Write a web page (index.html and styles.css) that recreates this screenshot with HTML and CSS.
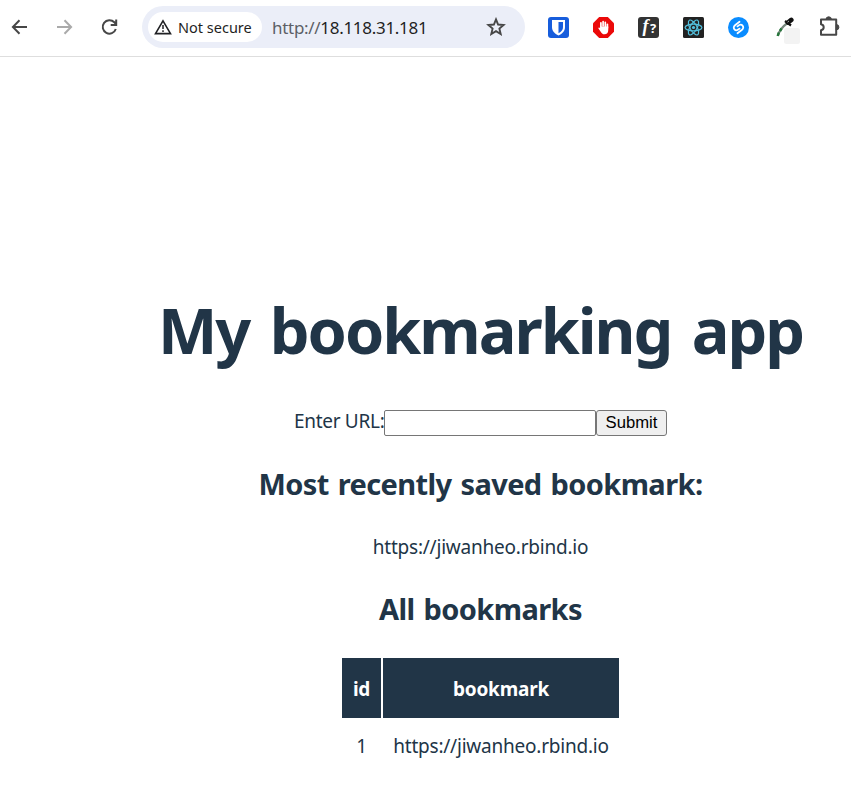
FILE: index.html
```
<!DOCTYPE html>
<html lang="en">
<head>
<meta charset="utf-8">
<title>My bookmarking app</title>
<link rel="stylesheet" href="styles.css">
</head>
<body>
<header class="toolbar">
  <nav class="nav">
    <svg width="18" height="18" viewBox="0 0 18 18" class="stroke"><path d="M16 9H2.500M8.500 2.200L1.900 9L8.500 15.800"/></svg>
    <svg width="18" height="18" viewBox="0 0 18 18" class="stroke disabled"><path d="M1 9H14.500M8.500 2.200L15.100 9L8.500 15.800"/></svg>
    <svg width="18" height="18" viewBox="0 0 18 18" class="stroke"><path d="M14.800 11A6.700 6.700 0 1 1 13.300 4.300L15.200 6.300M15.200 1.500V7H9.700"/></svg>
  </nav>
  <div class="address">
    <div class="chip">
      <svg width="18" height="16" viewBox="0 0 18 16"><path d="M9 1.800L16.500 14.600H1.500Z" fill="none" stroke="#202124" stroke-width="1.600"/><path d="M9 6V10M9 11.300V13" stroke="#202124" stroke-width="1.500"/></svg>
      <span class="chip-text">Not secure</span>
    </div>
    <span class="url"><span class="scheme">http://</span>18.118.31.181</span>
    <svg class="star" width="20" height="20" viewBox="0 0 20 20"><path d="M10 2.400L12.100 7.500L17.600 8L13.400 11.600L14.700 17L10 14.100L5.300 17L6.600 11.600L2.400 8L7.900 7.500Z" fill="none" stroke="#474747" stroke-width="1.900"/></svg>
  </div>
  <div class="extensions">
    <svg width="21" height="21" viewBox="0 0 21 21"><rect width="21" height="21" rx="3" fill="#175ddc"/><path d="M4 3H17V10C17 14 14.500 16.500 10.500 18.500C6.500 16.500 4 14 4 10Z" fill="#fff"/><path d="M10.500 5H15V10C15 13 13.500 14.500 10.500 16.200Z" fill="#175ddc"/></svg>
    <svg width="21" height="21" viewBox="0 0 21 21"><path d="M6.200 0H14.800L21 6.200V14.800L14.800 21H6.200L0 14.800V6.200Z" fill="#eb0909"/><path d="M7.900 10V5.800M10.100 9V4.500M12.300 10V5.300M14.400 11V7.300" stroke="#fff" stroke-width="1.700" stroke-linecap="round"/><path d="M7.100 9.500H15.250V13C15.250 16 13.800 17.300 11.500 17.300C9.500 17.300 8.600 16.200 7.700 14.700L5.300 11.200C5.300 10.200 6.400 10.200 7.100 11Z" fill="#fff"/></svg>
    <svg width="21" height="21" viewBox="0 0 21 21"><rect width="21" height="21" rx="3" fill="#333"/><text x="4.500" y="15.200" class="fn">f</text><text x="12" y="15.500" class="fn-mark">?</text></svg>
    <svg width="21" height="21" viewBox="0 0 21 21"><rect width="21" height="21" rx="1.500" fill="#222"/><g fill="none" stroke="#53c1de" stroke-width="1.200"><ellipse cx="10.500" cy="10.500" rx="8.400" ry="3.400"/><ellipse cx="10.500" cy="10.500" rx="8.400" ry="3.400" transform="rotate(60 10.500 10.500)"/><ellipse cx="10.500" cy="10.500" rx="8.400" ry="3.400" transform="rotate(120 10.500 10.500)"/></g><circle cx="10.500" cy="10.500" r="1.600" fill="#53c1de"/></svg>
    <svg width="21" height="21" viewBox="0 0 21 21"><circle cx="10.500" cy="10.500" r="10.500" fill="#0a8cff"/><path d="M11.500 4.800L7.300 8C5.300 9.700 5.300 11.500 6.800 12.800C8 13.800 9.500 13.300 11.500 11.600M9.500 16.200L13.700 13C15.700 11.300 15.700 9.500 14.200 8.200C13 7.200 11.500 7.700 9.500 9.400" fill="none" stroke="#fff" stroke-width="1.800" stroke-linecap="round"/></svg>
    <svg width="24" height="27" viewBox="0 0 24 27"><rect x="8" y="11" width="16" height="16" rx="2.500" fill="#f3f3f3"/><path d="M11.500 6C6 10 3.500 13 2 18.500" fill="none" stroke="#76867c" stroke-width="2.200"/><path d="M5.500 11.500L4 14M2.800 15.500L1.700 19" stroke="#26773b" stroke-width="2.500"/><path d="M9 4L15 8.500" stroke="#111" stroke-width="2.200"/><path d="M12 5.500L15.300 2.900" stroke="#111" stroke-width="4.600" stroke-linecap="round"/><path d="M11.500 5.200L13 4" stroke="#aaa"/></svg>
    <svg class="puzzle" width="22" height="22" viewBox="0 0 22 22"><path d="M2 3.500H17.200V18.800H2V14.200C5.600 13.500 5.600 8.800 2 8.200Z" fill="none" stroke="#474747" stroke-width="2" stroke-linejoin="round"/><path d="M7 3.500A2.700 2.700 0 0 1 12.400 3.500ZM17.200 8.500A2.700 2.700 0 0 1 17.200 13.900Z" fill="#474747" stroke="#474747"/></svg>
  </div>
</header>
<main class="app">
  <h1>My bookmarking app</h1>
  <form class="form">
    <label for="url">Enter URL:</label><input id="url" type="text"><button type="button">Submit</button>
  </form>
  <h2 class="recent">Most recently saved bookmark:</h2>
  <p>https://jiwanheo.rbind.io</p>
  <h2 class="all">All bookmarks</h2>
  <table>
    <thead><tr><th class="id">id</th><th>bookmark</th></tr></thead>
    <tbody><tr><td class="num">1</td><td>https://jiwanheo.rbind.io</td></tr></tbody>
  </table>
</main>
</body>
</html>
```
FILE: styles.css
```
* { box-sizing: border-box; }
body {
  margin: 0;
  background: #fff;
  color: #213547;
  font-family: "Noto Sans", "Open Sans", sans-serif;
  font-size: 19px;
  letter-spacing: -0.22px;
  overflow: hidden;
}
svg { display: block; flex: none; }
.toolbar {
  display: flex;
  align-items: center;
  height: 57px;
  padding: 0 0 2px 11px;
  border-bottom: 1px solid #dedede;
  letter-spacing: 0;
}
.nav { display: flex; gap: 27px; width: 131px; }
.stroke { fill: none; stroke: #474747; stroke-width: 2; }
.disabled { stroke: #aaa; }
.address {
  display: flex;
  align-items: center;
  width: 383px;
  height: 42px;
  padding: 0 19px 0 6px;
  border-radius: 21px;
  background: #ebeef8;
}
.chip {
  display: flex;
  align-items: center;
  gap: 6px;
  width: 114px;
  height: 30px;
  padding-left: 6px;
  border-radius: 15px;
  background: #fff;
  color: #1f1f1f;
}
.chip-text { font-size: 14.5px; white-space: nowrap; padding-bottom: 1px; }
.url { margin-left: 10px; font-size: 17px; color: #1f1f1f; letter-spacing: -0.3px; }
.scheme { color: #5c5f66; }
.star { margin-left: auto; }
.extensions { display: flex; align-items: center; gap: 24px; margin-left: 23px; }
.extensions svg:nth-child(6) { margin: 6px -5px 0 3px; }
.fn { font: italic bold 18px "Liberation Serif", serif; fill: #fff; }
.fn-mark { font: bold 13px "Open Sans", sans-serif; fill: #fff; }
.app {
  display: flex;
  flex-direction: column;
  align-items: center;
  padding: 236px 0 0 110px;
}
h1, h2, p { margin: 0; white-space: nowrap; }
h1 {
  height: 72px;
  font-size: 63px;
  font-weight: 700;
  line-height: 73px;
  letter-spacing: -2px;
  word-spacing: 6px;
}
.form { display: flex; align-items: center; height: 26px; margin-top: 45px; }
.form label {
  width: 90px;
  padding-bottom: 4px;
  line-height: 24px;
  letter-spacing: -0.3px;
  white-space: nowrap;
}
input {
  width: 212px;
  height: 26px;
  border: 1px solid #767676;
  border-radius: 2px;
  background: #fff;
}
button {
  width: 71px;
  height: 26px;
  padding: 0;
  border: 1px solid #767676;
  border-radius: 3px;
  background: #efefef;
  color: #000;
  font: 16.67px "Liberation Sans", sans-serif;
}
h2 { font-size: 29px; line-height: 40px; letter-spacing: -0.6px; word-spacing: 2px; }
.recent { margin-top: 28px; }
p { line-height: 30px; margin-top: 28px; }
.all { margin-top: 27px; }
table { margin-top: 27px; border-spacing: 2px; }
th, td { padding: 0; text-align: center; }
th { width: 236px; height: 60px; padding-top: 2px; background: #213547; color: #fff; }
th.id { width: 39px; }
td { height: 52px; white-space: nowrap; }
```
